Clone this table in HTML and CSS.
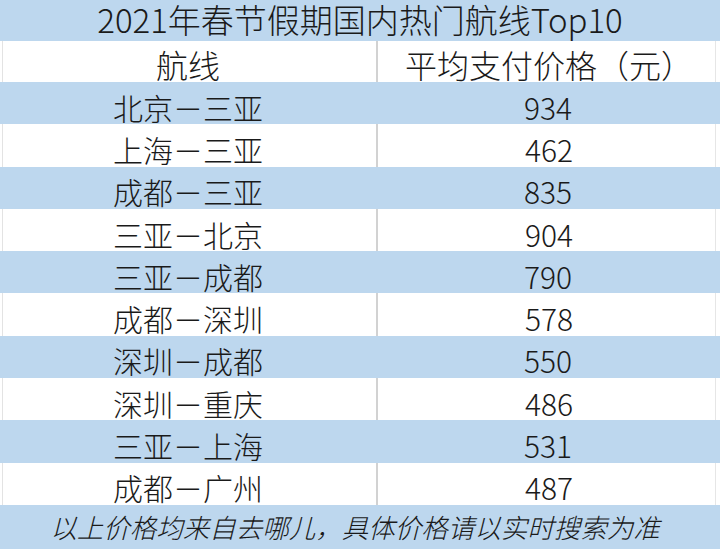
FILE: index.html
```html
<!DOCTYPE html>
<html lang="zh">
<head>
<meta charset="utf-8">
<link rel="stylesheet" href="styles.css">
</head>
<body>
<div class="sheet">
  <div class="row blue merged title">2021年春节假期国内热门航线Top10</div>
  <div class="row white head"><div class="c1">航线</div><div class="c2">平均支付价格（元）</div></div>
  <div class="row blue"><div class="c1">北京－三亚</div><div class="c2">934</div></div>
  <div class="row white"><div class="c1">上海－三亚</div><div class="c2">462</div></div>
  <div class="row blue"><div class="c1">成都－三亚</div><div class="c2">835</div></div>
  <div class="row white"><div class="c1">三亚－北京</div><div class="c2">904</div></div>
  <div class="row blue"><div class="c1">三亚－成都</div><div class="c2">790</div></div>
  <div class="row white"><div class="c1">成都－深圳</div><div class="c2">578</div></div>
  <div class="row blue"><div class="c1">深圳－成都</div><div class="c2">550</div></div>
  <div class="row white"><div class="c1">深圳－重庆</div><div class="c2">486</div></div>
  <div class="row blue"><div class="c1">三亚－上海</div><div class="c2">531</div></div>
  <div class="row white"><div class="c1">成都－广州</div><div class="c2">487</div></div>
  <div class="row blue merged foot">以上价格均来自去哪儿，具体价格请以实时搜索为准</div>
</div>
</body>
</html>
```
FILE: styles.css
```css
html, body {
  margin: 0;
  padding: 0;
  background: #ffffff;
}
.sheet {
  width: 720px;
  height: 549px;
  display: grid;
  grid-template-rows: 41px 41px repeat(10, 42.3px) 1fr;
  font-family: "Noto Sans CJK SC", "Noto Sans", sans-serif;
  font-weight: 300;
  color: #1a1a1a;
  font-size: 30px;
  line-height: 1;
}
.row {
  display: grid;
  grid-template-columns: 376px 1fr;
}
.row > div {
  display: flex;
  align-items: center;
  justify-content: center;
  padding-top: 7px;
  box-sizing: border-box;
  white-space: nowrap;
}
.blue {
  background: #bdd7ee;
}
.white {
  background: #ffffff;
  box-shadow: inset 2px 0 0 #ffffff, inset 3px 0 0 #e3e3e3, inset -4px 0 0 #ffffff, inset -5px 0 0 #e6e6e6;
}
.white .c2 {
  border-left: 2px solid #d2d2d2;
}
.head > div {
  font-size: 32px;
  padding-top: 5px;
}
.merged {
  display: flex;
  justify-content: center;
  align-items: center;
  white-space: nowrap;
}
.title {
  font-size: 33px;
  padding-bottom: 3px;
}
.foot {
  font-size: 26.5px;
  font-style: italic;
  padding-right: 10px;
}
```
